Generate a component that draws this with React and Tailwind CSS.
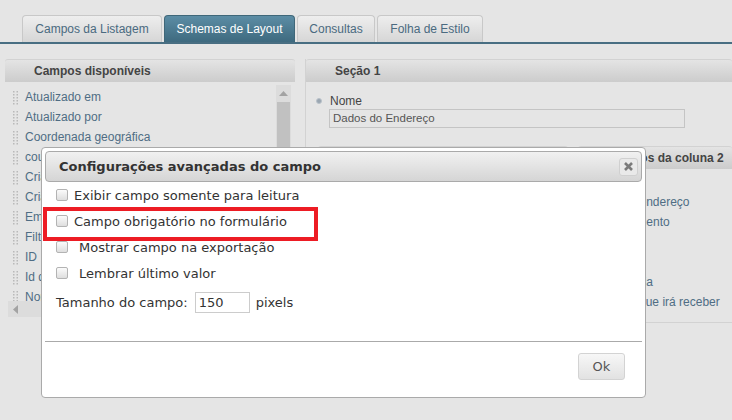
import React from 'react'

const TABS = [
  { label: 'Campos da Listagem', w: 'w-[140px]' },
  { label: 'Schemas de Layout', w: 'w-[131px]', active: true },
  { label: 'Consultas', w: 'w-[78px]' },
  { label: 'Folha de Estilo', w: 'w-[106px]' },
]

const AVAILABLE = [
  'Atualizado em',
  'Atualizado por',
  'Coordenada geográfica',
  'country',
  'Criado em',
  'Criado por',
  'Empresa',
  'Filtro',
  'ID',
  'Id do registro',
  'Nome',
]

const COLUMN_2 = ['CEP do endereço', 'Complemento', 'Bairro', 'Cidade', 'Referência', 'Destino que irá receber']

const OPTIONS = [
  { label: 'Exibir campo somente para leitura' },
  { label: 'Campo obrigatório no formulário' },
  { label: 'Mostrar campo na exportação', pad: true },
  { label: 'Lembrar último valor', pad: true },
]

function Grip() {
  return (
    <svg width="7" height="15" viewBox="0 0 7 15" className="shrink-0">
      {[0, 1, 2, 3, 4].map((r) => (
        <g key={r} fill="#b9b9b9">
          <rect x="1" y={1 + r * 3} width="1.5" height="1.5" />
          <rect x="4.5" y={1 + r * 3} width="1.5" height="1.5" />
        </g>
      ))}
    </svg>
  )
}

function PanelHeader({ children }) {
  return (
    <div className="h-[23px] shrink-0 flex items-center pl-[29px] rounded-t-[3px] border-t border-[#d2d2d2] bg-linear-to-b from-[#e4e4e4] to-[#cccccc] text-[12px] font-bold text-[#444]">
      {children}
    </div>
  )
}

function Checkbox() {
  return (
    <span className="w-[12px] h-[12px] shrink-0 mb-[2px] rounded-[2px] border border-[#b3b3b3] bg-linear-to-b from-[#fbfbfb] to-[#dedede]" />
  )
}

export default function App() {
  return (
    <div className="relative w-[732px] h-[420px] overflow-hidden bg-[#e5e5e5] font-['Liberation_Sans',Arial,sans-serif]">
      {/* Tabs */}
      <div className="h-[44px] pt-[15px] pl-[22px] flex items-end gap-[2px] border-b-2 border-[#486e82]">
        {TABS.map((t) => (
          <div
            key={t.label}
            className={`${t.w} h-[27px] flex items-center justify-center rounded-t-[4px] border border-b-0 text-[12px] ${
              t.active
                ? 'bg-linear-to-b from-[#5c8da5] to-[#3e6a7f] border-[#3f6779] text-white'
                : 'bg-linear-to-b from-[#eeeeee] to-[#d6d6d6] border-[#c8c8c8] text-[#4a6a80]'
            }`}
          >
            {t.label}
          </div>
        ))}
      </div>

      {/* Panels */}
      <div className="mt-[15px] pl-[5px] flex gap-[10px]">
        <div className="w-[290px] h-[259px] flex flex-col">
          <PanelHeader>Campos disponíveis</PanelHeader>
          <div className="flex-1 flex flex-col overflow-hidden">
            <div className="flex-1 flex min-h-0">
              <ul className="flex-1 pt-[5px] overflow-hidden">
                {AVAILABLE.map((f) => (
                  <li key={f} className="h-[20px] flex items-center gap-[6px] pl-[7px] text-[12px] text-[#4f6d84] whitespace-nowrap">
                    <Grip />
                    {f}
                  </li>
                ))}
              </ul>
              <div className="w-[15px] mt-[3px] mr-[4px] bg-[#dcdcdc] flex flex-col">
                <div className="h-[17px] flex items-center justify-center">
                  <svg width="9" height="5" viewBox="0 0 9 5"><path d="M0 5 L4.5 0 L9 5 Z" fill="#a3a3a3" /></svg>
                </div>
                <div className="flex-1 mx-[1px] bg-[#c1c1c1]" />
              </div>
            </div>
            <div className="h-[16px] ml-[3px] mr-[19px] mb-[1px] bg-[#dcdcdc] flex items-center pl-[5px]">
              <svg width="5" height="9" viewBox="0 0 5 9"><path d="M5 0 L0 4.5 L5 9 Z" fill="#a3a3a3" /></svg>
            </div>
          </div>
        </div>

        <div className="flex-1 h-[264px] flex flex-col border-l border-b border-[#d2d2d2]">
          <PanelHeader>Seção 1</PanelHeader>
          <div className="pt-[12px] pl-[10px]">
            <div className="flex items-center gap-[8px] h-[14px] text-[12px] text-[#444]">
              <span className="w-[6px] h-[6px] rounded-full bg-[#9aa6b1] border border-[#b9c2ca]" />
              Nome
            </div>
            <div className="ml-[13px] mt-[1px] w-[356px] h-[19px] border border-[#c4c4c4] flex items-center pl-[3px] text-[11.5px] text-[#555]">
              Dados do Endereço
            </div>
          </div>
          <div className="mt-[18px] pl-[12px] flex gap-[10px]">
            <div className="w-[250px] h-[170px] flex flex-col">
              <PanelHeader>Campos da coluna 1</PanelHeader>
            </div>
            <div className="flex-1 h-[170px] flex flex-col">
              <PanelHeader>Campos da coluna 2</PanelHeader>
              <ul className="pt-[23px]">
                {COLUMN_2.map((f) => (
                  <li key={f} className="h-[20px] flex items-center gap-[6px] pl-[4px] text-[12px] text-[#4f6d84] whitespace-nowrap">
                    <Grip />
                    {f}
                  </li>
                ))}
              </ul>
            </div>
          </div>
        </div>
      </div>

      {/* Dialog */}
      <div className="absolute left-[41px] top-[147px] w-[605px] h-[251px] p-[3px] bg-white border border-[#aaaaaa] rounded-[4px] flex flex-col font-['DejaVu_Sans',Verdana,sans-serif] text-[13px] text-[#333]">
        <div className="h-[31px] shrink-0 flex items-center justify-between pl-[13px] pr-[3px] rounded-[4px] border border-[#aaaaaa] bg-linear-to-b from-[#f1f1f1] to-[#d5d5d5]">
          <span className="font-bold text-[#333]">Configurações avançadas do campo</span>
          <button className="w-[19px] h-[18px] flex items-center justify-center rounded-[3px] border border-[#d0d0d0] bg-[#e9e9e9]">
            <svg width="9" height="9" viewBox="0 0 9 9">
              <path d="M1 1 L8 8 M8 1 L1 8" stroke="#7a7a7a" strokeWidth="2.6" />
            </svg>
          </button>
        </div>

        <div className="pt-[1px] pl-[11px] pb-[23px]">
          {OPTIONS.map((o) => (
            <label key={o.label} className={`h-[26px] flex items-center ${o.pad ? 'gap-[11px]' : 'gap-[6px]'}`}>
              <Checkbox />
              {o.label}
            </label>
          ))}
          <div className="h-[31px] flex items-center">
            <span className="mr-[7px]">Tamanho do campo:</span>
            <span className="w-[55px] h-[21px] border border-[#cccccc] flex items-center pl-[3px]">150</span>
            <span className="ml-[6px]">pixels</span>
          </div>
        </div>

        <div className="flex-1 border-t border-[#aaaaaa] flex justify-end items-start pt-[11px] pr-[17px]">
          <button className="w-[47px] h-[27px] rounded-[3px] border border-[#d3d3d3] bg-linear-to-b from-[#f7f7f7] to-[#e2e2e2] text-[#555]">
            Ok
          </button>
        </div>

        {/* highlight annotation */}
        <div className="absolute left-[1px] top-[59px] w-[275px] h-[34px] border-4 border-[#ed1c24]" />
      </div>
    </div>
  )
}
